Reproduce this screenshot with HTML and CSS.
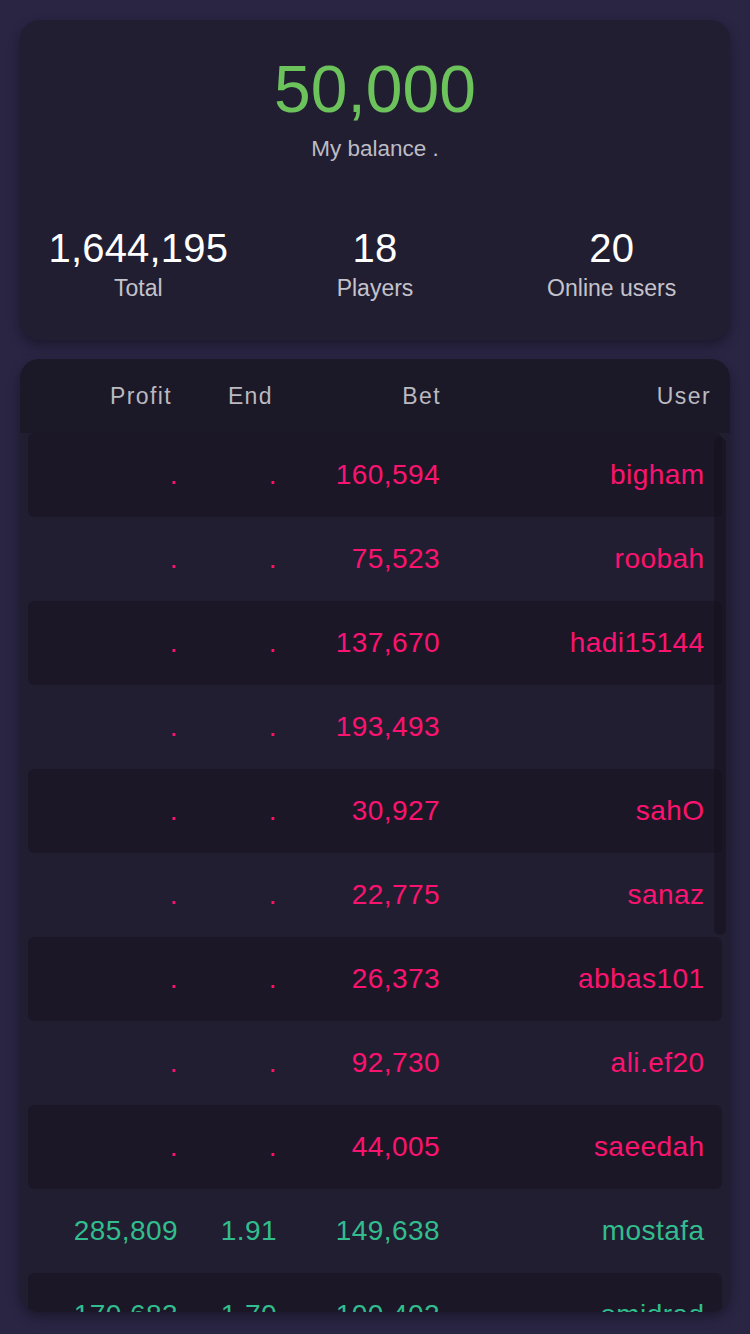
FILE: index.html
```html
<!DOCTYPE html>
<html lang="en">
<head>
<meta charset="utf-8">
<title>Board</title>
<link rel="stylesheet" href="styles.css">
</head>
<body>
<div class="page">
  <section class="summary">
    <div class="balance">50,000</div>
    <div class="balance-label">My balance .</div>
    <div class="stats">
      <div class="stat"><div class="stat-value">1,644,195</div><div class="stat-label">Total</div></div>
      <div class="stat"><div class="stat-value">18</div><div class="stat-label">Players</div></div>
      <div class="stat"><div class="stat-value">20</div><div class="stat-label">Online users</div></div>
    </div>
  </section>

  <section class="board">
    <div class="board-head">
      <span>Profit</span><span>End</span><span>Bet</span><span>User</span>
    </div>
    <div class="board-body">
      <div class="row dark lose"><span>.</span><span>.</span><span>160,594</span><span>bigham</span></div>
      <div class="row lose"><span>.</span><span>.</span><span>75,523</span><span>roobah</span></div>
      <div class="row dark lose"><span>.</span><span>.</span><span>137,670</span><span>hadi15144</span></div>
      <div class="row lose"><span>.</span><span>.</span><span>193,493</span><span></span></div>
      <div class="row dark lose"><span>.</span><span>.</span><span>30,927</span><span>sahO</span></div>
      <div class="row lose"><span>.</span><span>.</span><span>22,775</span><span>sanaz</span></div>
      <div class="row dark lose"><span>.</span><span>.</span><span>26,373</span><span>abbas101</span></div>
      <div class="row lose"><span>.</span><span>.</span><span>92,730</span><span>ali.ef20</span></div>
      <div class="row dark lose"><span>.</span><span>.</span><span>44,005</span><span>saeedah</span></div>
      <div class="row win"><span>285,809</span><span>1.91</span><span>149,638</span><span>mostafa</span></div>
      <div class="row dark win"><span>170,683</span><span>1.70</span><span>100,402</span><span>omidrad</span></div>
      <div class="scroll-thumb"></div>
    </div>
  </section>
</div>
</body>
</html>
```

FILE: styles.css
```css
* { box-sizing: border-box; }

html, body {
  margin: 0;
  padding: 0;
  background: #2a2543;
  font-family: "Liberation Sans", Arial, sans-serif;
}

.page {
  width: 750px;
  height: 1334px;
  padding: 20px;
  display: flex;
  flex-direction: column;
  gap: 19px;
  overflow: hidden;
}

.summary {
  height: 320px;
  background: #221e31;
  border-radius: 20px;
  box-shadow: 0 5px 12px rgba(10, 8, 20, 0.45);
  padding-top: 36px;
  display: flex;
  flex-direction: column;
  align-items: center;
}

.balance {
  font-size: 66px;
  line-height: 66px;
  color: #6cc35c;
}

.balance-label {
  margin-top: 16px;
  font-size: 22.5px;
  line-height: 22px;
  color: #bdbcc4;
}

.stats {
  margin-top: 68px;
  width: 100%;
  display: grid;
  grid-template-columns: 1fr 1fr 1fr;
}

.stat {
  display: flex;
  flex-direction: column;
  align-items: center;
}

.stat-value {
  font-size: 40px;
  line-height: 40px;
  letter-spacing: 0.2px;
  color: #ffffff;
}

.stat-label {
  margin-top: 9px;
  font-size: 23px;
  line-height: 23px;
  color: #c4c3cb;
}

.board {
  height: 953px;
  background: #221e31;
  border-radius: 20px;
  box-shadow: 0 5px 12px rgba(10, 8, 20, 0.45);
  overflow: hidden;
  display: flex;
  flex-direction: column;
}

.board-head {
  flex: 0 0 74px;
  background: #1b1827;
  display: grid;
  grid-template-columns: 152px 101px 168px 1fr;
  align-items: center;
  padding-right: 19px;
  font-size: 23px;
  letter-spacing: 1.4px;
  color: #bab9c0;
  text-align: right;
}

.board-body {
  position: relative;
  flex: 1;
  overflow: hidden;
  padding: 0 8px;
}

.row {
  height: 84px;
  display: grid;
  grid-template-columns: 150px 99px 163px 1fr;
  align-items: center;
  padding-right: 17.5px;
  font-size: 28px;
  line-height: 28px;
  letter-spacing: 0.45px;
  text-align: right;
  border-radius: 6px;
}

.row.dark { background: #1b1727; }
.row.lose { color: #fa136f; }
.row.win { color: #31bd8d; }

.scroll-thumb {
  position: absolute;
  top: 4px;
  right: 4px;
  width: 12px;
  height: 498px;
  border-radius: 6px;
  background: rgba(20, 17, 30, 0.55);
}
```
